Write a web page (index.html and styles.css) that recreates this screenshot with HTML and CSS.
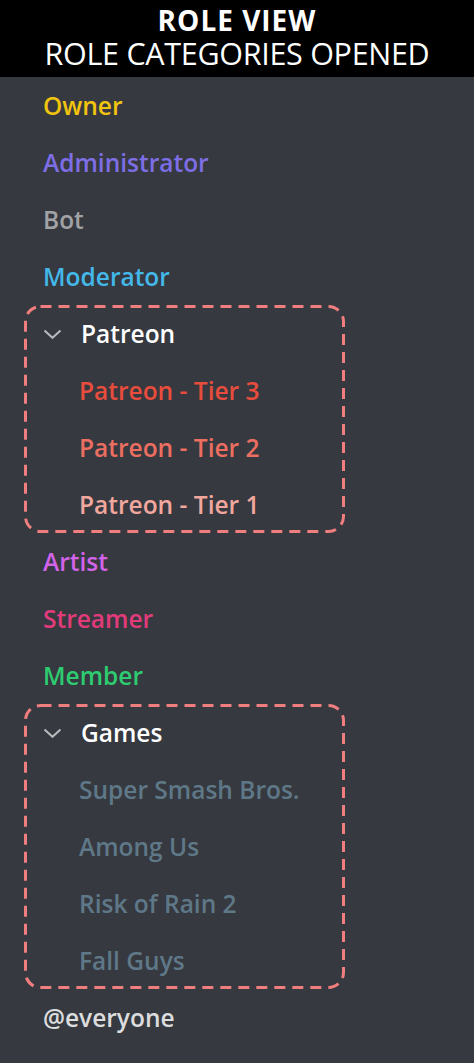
FILE: index.html
```html
<!DOCTYPE html>
<html>
<head>
<meta charset="utf-8">
<link rel="stylesheet" href="styles.css">
</head>
<body>
<header class="banner">
  <div class="banner-title">ROLE VIEW</div>
  <div class="banner-sub">ROLE CATEGORIES OPENED</div>
</header>
<main class="roles">
  <div class="role owner">Owner</div>
  <div class="role admin">Administrator</div>
  <div class="role bot">Bot</div>
  <div class="role mod">Moderator</div>
  <section class="group">
    <svg class="group-border"><rect/></svg>
    <div class="role category">
      <svg class="chev" viewBox="0 0 19 10" width="19" height="10"><path d="M1.5 1.5 L9.5 8.8 L17.5 1.5" fill="none" stroke="#b9bbbe" stroke-width="2"/></svg>
      <span>Patreon</span>
    </div>
    <div class="role child tier3">Patreon - Tier 3</div>
    <div class="role child tier2">Patreon - Tier 2</div>
    <div class="role child tier1">Patreon - Tier 1</div>
  </section>
  <div class="role artist">Artist</div>
  <div class="role streamer">Streamer</div>
  <div class="role member">Member</div>
  <section class="group">
    <svg class="group-border"><rect/></svg>
    <div class="role category">
      <svg class="chev" viewBox="0 0 19 10" width="19" height="10"><path d="M1.5 1.5 L9.5 8.8 L17.5 1.5" fill="none" stroke="#b9bbbe" stroke-width="2"/></svg>
      <span>Games</span>
    </div>
    <div class="role child game">Super Smash Bros.</div>
    <div class="role child game">Among Us</div>
    <div class="role child game">Risk of Rain 2</div>
    <div class="role child game">Fall Guys</div>
  </section>
  <div class="role everyone">@everyone</div>
</main>
</body>
</html>
```

FILE: styles.css
```css
html, body {
  margin: 0;
  padding: 0;
  background: #36393f;
}
body {
  width: 474px;
  height: 1063px;
  overflow: hidden;
  font-family: "Open Sans", "DejaVu Sans", sans-serif;
}
.banner {
  background: #000;
  height: 77px;
  box-sizing: border-box;
  padding-top: 3px;
  color: #fff;
  text-align: center;
}
.banner-title {
  font-weight: 700;
  font-size: 28px;
  letter-spacing: 1px;
  line-height: 34px;
}
.banner-sub {
  font-size: 30.5px;
  letter-spacing: -0.3px;
  line-height: 33px;
}
.roles {
  display: flex;
  flex-direction: column;
  padding: 0 0 0 24px;
}
.role {
  height: 57px;
  display: flex;
  align-items: center;
  font-size: 24.5px;
  font-weight: 600;
  padding-left: 19px;
  box-sizing: border-box;
  white-space: nowrap;
}
.group {
  position: relative;
  width: 321px;
  margin: 0;
}
.group-border {
  position: absolute;
  left: 0;
  top: 0;
  width: 100%;
  height: 100%;
  pointer-events: none;
}
.group-border rect {
  x: 1.5px;
  y: 1.5px;
  width: calc(100% - 3px);
  height: calc(100% - 3px);
  rx: 15px;
  ry: 15px;
  fill: none;
  stroke: #f07e7e;
  stroke-width: 3px;
  stroke-dasharray: 11 7;
}
.group .child { padding-left: 55px; }
.category { color: #ffffff; gap: 19px; }
.chev { display: block; }
.owner { color: #f1c40f; }
.admin { color: #7e6ee6; }
.bot { color: #a0a2a6; }
.mod { color: #43b8e9; }
.tier3 { color: #e74c3c; }
.tier2 { color: #ec6e61; }
.tier1 { color: #f2a79e; }
.artist { color: #d363e8; }
.streamer { color: #e23b7b; }
.member { color: #2ecc71; }
.game { color: #5f7888; }
.everyone { color: #dcddde; }
```
